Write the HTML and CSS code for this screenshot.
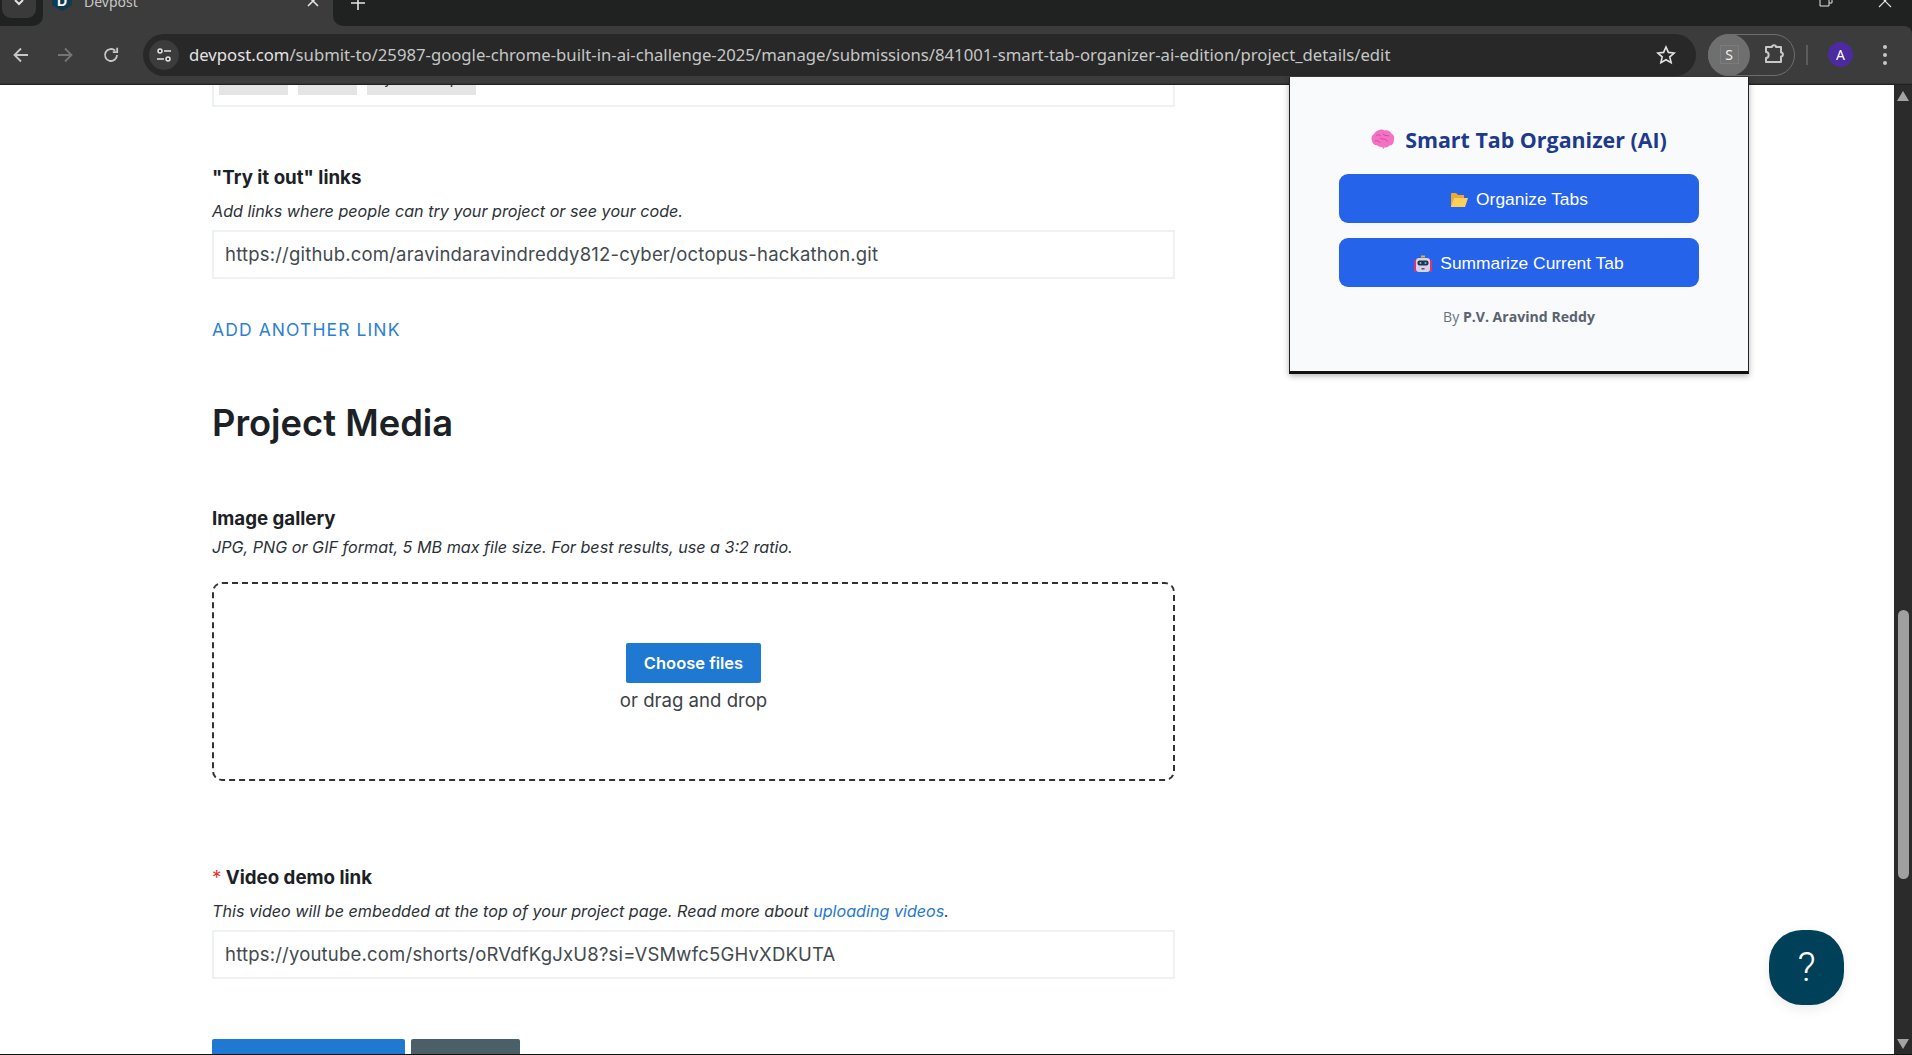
FILE: index.html
```html
<!DOCTYPE html>
<html lang="en">
  <head>
    <meta charset="UTF-8" />
    <meta name="viewport" content="width=device-width, initial-scale=1.0" />
    <title>Devpost</title>
    <link rel="stylesheet" href="styles.css">
  </head>
  <body>
    <header class="browser">
      <div class="tabstrip">
        <div class="strip-left">
          <div class="tab-list">
            <svg width="12" height="12" viewBox="0 0 12 12"><path d="M2 0l4 4 4-4" fill="none" stroke="#e3e3e3" stroke-width="2"/></svg>
          </div>
        </div>
        <div class="tab">
          <span class="favicon">D</span>
          <span class="tab-title">Devpost</span>
          <svg class="tab-close" width="12" height="12" viewBox="0 0 12 12"><path d="M1 1l10 10M11 1L1 11" stroke="#e3e3e3" stroke-width="1.6"/></svg>
        </div>
        <div class="strip-rest">
          <svg class="new-tab" width="14" height="14" viewBox="0 0 14 14"><path d="M7 0v14M0 7h14" stroke="#e3e3e3" stroke-width="1.6"/></svg>
          <div class="window-controls">
            <svg width="14" height="14" viewBox="0 0 14 14"><path d="M1 3h9v9H1zM4 3V1h9v8h-3" fill="none" stroke="#e3e3e3"/></svg>
            <svg width="14" height="14" viewBox="0 0 14 14"><path d="M1 1l12 12M13 1L1 13" stroke="#e3e3e3" stroke-width="1.1"/></svg>
          </div>
        </div>
      </div>
      <div class="toolbar">
        <svg class="nav-btn" width="18" height="18" viewBox="0 0 18 18"><path d="M16 9H2.5M9 2.5L2.5 9 9 15.500" fill="none" stroke="#c7c7c7" stroke-width="1.800"/></svg>
        <svg class="nav-btn" width="18" height="18" viewBox="0 0 18 18"><path d="M2 9h13.500M9 2.500L15.500 9 9 15.500" fill="none" stroke="#757575" stroke-width="1.800"/></svg>
        <svg class="nav-btn" width="18" height="18" viewBox="0 0 18 18"><path d="M15 9a6 6 0 1 1-1.800-4.300M15.200 1.800v4.400h-4.400" fill="none" stroke="#c7c7c7" stroke-width="1.800"/></svg>
        <div class="omnibox">
          <span class="site-info">
            <svg width="16" height="16" viewBox="0 0 16 16"><g fill="none" stroke="#e3e3e3" stroke-width="1.500"><circle cx="4" cy="4" r="2"/><circle cx="12" cy="12" r="2"/><path d="M8 4h7M1 12h7"/></g></svg>
          </span>
          <span class="url">devpost.com<span class="url-path">/submit-to/25987-google-chrome-built-in-ai-challenge-2025/manage/submissions/841001-smart-tab-organizer-ai-edition/project_details/edit</span></span>
          <svg class="star" width="20" height="20" viewBox="0 0 20 20"><path d="M10 2l2.400 5.400 5.800.6-4.400 3.900 1.300 5.700L10 14.700l-5.100 2.900 1.300-5.700L1.800 8l5.800-.6z" fill="none" stroke="#e3e3e3" stroke-width="1.600"/></svg>
        </div>
        <div class="ext-group">
          <span class="ext-active"><span class="ext-letter">S</span></span>
          <svg class="puzzle" width="23" height="21" viewBox="0 0 23 21"><path d="M3 3h6c0-2.500 4-2.500 4 0h5v5.500c2.500 0 2.500 4 0 4V18H3v-4c3.500 0 3.500-6 0-6z" fill="none" stroke="#c8c8c8" stroke-width="2" stroke-linejoin="round"/></svg>
        </div>
        <span class="toolbar-sep"></span>
        <span class="avatar">A</span>
        <svg class="kebab" width="6" height="22" viewBox="0 0 6 22"><circle cx="3" cy="3" r="2" fill="#c7c7c7"/><circle cx="3" cy="11" r="2" fill="#c7c7c7"/><circle cx="3" cy="19" r="2" fill="#c7c7c7"/></svg>
      </div>
    </header>

    <div class="viewport">
      <main class="page">
        <div class="tag-box">
          <span class="tag tag-a">Gemini</span>
          <span class="tag tag-b">Nano</span>
          <span class="tag tag-c">Python scripts</span>
        </div>

        <section class="field try-links">
          <label class="field-label">"Try it out" links</label>
          <p class="hint">Add links where people can try your project or see your code.</p>
          <div class="text-input">https://github.com/aravindaravindreddy812-cyber/octopus-hackathon.git</div>
          <a class="add-link">ADD ANOTHER LINK</a>
        </section>

        <h2 class="section-title">Project Media</h2>

        <section class="field gallery">
          <label class="field-label">Image gallery</label>
          <p class="hint hint-tight">JPG, PNG or GIF format, 5 MB max file size. For best results, use a 3:2 ratio.</p>
          <div class="dropzone">
            <button class="choose-btn">Choose files</button>
            <span class="drop-note">or drag and drop</span>
          </div>
        </section>

        <section class="field video">
          <label class="field-label"><span class="required">*</span> Video demo link</label>
          <p class="hint">This video will be embedded at the top of your project page. Read more about <a class="hint-link">uploading videos</a>.</p>
          <div class="text-input">https://youtube.com/shorts/oRVdfKgJxU8?si=VSMwfc5GHvXDKUTA</div>
        </section>

        <div class="form-actions">
          <span class="action action-save"></span>
          <span class="action action-back"></span>
        </div>
      </main>
      <aside class="scrollbar">
        <span class="arrow-up"></span>
        <span class="thumb"></span>
        <span class="arrow-down"></span>
      </aside>
    </div>

    <div class="ext-popup">
      <h3 class="popup-title">
        <svg width="24" height="22" viewBox="0 0 24 22"><path d="M7 1.500c2-1.200 5-1.200 6.500 0 3-.8 6 .6 6.800 3 2.500 1 3.500 4 2.500 6.500.5 3-1.500 5.500-4.500 5.600-1 1.600-3 2.300-4.800 1.700l-1 2-1.300-2.400c-2 .3-4-.3-5-1.600C3.500 16.300 1 14.500 1 11.500-.2 9 .8 6 3 5c.5-1.500 2.200-3 4-3.500z" fill="#f472c4"/><path d="M5 7c2-2 4-1 5 0M12 5c2 2 4 1 6 2M4 12c2-1 4 0 5 2M12 10c2 0 4 1 5 3M9 9c1 1 2 1 3 1" fill="none" stroke="#d946a6" stroke-width="1"/></svg>
        <span>Smart Tab Organizer (AI)</span>
      </h3>
      <button class="popup-btn">
        <svg width="18" height="16" viewBox="0 0 18 16"><path d="M1 15V2a1 1 0 0 1 1-1h4l2 2h6v3H5L2 15z" fill="#f0a92e"/><path d="M1 15l3-9h14l-3 9z" fill="#fdd05a"/></svg>
        <span>Organize Tabs</span>
      </button>
      <button class="popup-btn">
        <svg width="18" height="18" viewBox="0 0 18 18"><path d="M1 5v12M17 5v12" stroke="#d9366f" stroke-width="2"/><rect x="7" y="0.500" width="4" height="2" fill="#f0b429"/><rect x="2" y="3" width="14" height="14" rx="3" fill="#d9d2e6"/><rect x="3.500" y="5.500" width="11" height="5" rx="2" fill="#24344d"/><circle cx="6.500" cy="8" r="1" fill="#59c6f2"/><circle cx="11.500" cy="8" r="1" fill="#59c6f2"/><rect x="7.500" y="13" width="3" height="1.500" fill="#5a4d73"/></svg>
        <span>Summarize Current Tab</span>
      </button>
      <p class="popup-by">By <strong>P.V. Aravind Reddy</strong></p>
    </div>

    <div class="help-btn">?</div>
  </body>
</html>
```

FILE: styles.css
```css
* {
  box-sizing: border-box;
}
html, body {
  height: 100%;
}
body {
  margin: 0;
  height: 1055px;
  overflow: hidden;
  background: #fff;
  color: #1b2125;
  font-family: Inter, sans-serif;
  display: flex;
  flex-direction: column;
  border-bottom: 1px solid #111;
}
p, h2, h3 {
  margin: 0;
}

/* browser chrome */
.browser {
  flex: none;
  height: 85px;
  background: #202221;
  font-family: "Noto Sans", sans-serif;
  display: flex;
  flex-direction: column;
}
.tabstrip {
  height: 26px;
  background: #3c3c3c;
  display: flex;
  align-items: stretch;
  overflow: hidden;
}
.strip-left {
  width: 43px;
  flex: none;
  background: #202221;
  border-radius: 0 0 10px 0;
}
.tab-list {
  width: 34px;
  height: 18px;
  margin-left: 2px;
  background: #3a3a3a;
  border-radius: 0 0 9px 9px;
  display: flex;
  justify-content: center;
}
.tab {
  width: 290px;
  flex: none;
  display: flex;
  align-items: flex-start;
  padding-left: 9px;
}
.favicon {
  width: 20px;
  height: 20px;
  margin-top: -9px;
  background: #0b3c53;
  clip-path: polygon(50% 0, 100% 25%, 100% 70%, 50% 100%, 0 70%, 0 25%);
  color: #fff;
  font: bold 14px "Liberation Sans", sans-serif;
  text-align: center;
  line-height: 21px;
}
.tab-title {
  margin: -8px 0 0 12px;
  font-size: 14px;
  line-height: 20px;
  color: #c7c7c7;
  flex: 1;
}
.tab-close {
  margin: -5px 14px 0 0;
}
.strip-rest {
  flex: 1;
  background: #202221;
  border-radius: 0 0 0 10px;
  display: flex;
  align-items: flex-start;
}
.new-tab {
  margin: -4px 0 0 18px;
}
.window-controls {
  margin-left: auto;
  margin-top: -6px;
  display: flex;
  gap: 45px;
  padding-right: 20px;
}
.toolbar {
  height: 58px;
  flex: none;
  background: #3c3c3c;
  border-bottom: 1px solid #343434;
  border-radius: 0 8px 0 0;
  display: flex;
  align-items: center;
  padding: 0 0 0 12px;
}
.nav-btn {
  margin-right: 26px;
  flex: none;
}
.nav-btn:nth-child(3) {
  margin-left: 2px;
  margin-right: 23px;
}
.omnibox {
  width: 1553px;
  height: 42px;
  background: #282828;
  border-radius: 21px;
  display: flex;
  align-items: center;
  padding-left: 6px;
}
.site-info {
  width: 30px;
  height: 30px;
  border-radius: 50%;
  background: #3c3c3c;
  display: flex;
  align-items: center;
  justify-content: center;
}
.url {
  margin-left: 10px;
  font-size: 16.700px;
  color: #e3e3e3;
  white-space: nowrap;
}
.url-path {
  color: #c4c7c5;
}
.star {
  margin-left: auto;
  margin-right: 20px;
}
.ext-group {
  width: 87px;
  height: 42px;
  margin-left: 12px;
  border: 1px solid #6e6e6e;
  border-radius: 21px;
  display: flex;
  align-items: center;
}
.ext-active {
  width: 42px;
  height: 42px;
  margin-left: -1px;
  flex: none;
  background: #6f6f6f;
  border-radius: 50%;
  display: flex;
  align-items: center;
  justify-content: center;
}
.ext-letter {
  width: 19px;
  height: 19px;
  font-size: 14px;
  line-height: 17px;
  text-align: center;
  color: #f0f0f0;
  background: #707070;
  border: 1px solid #7c7c7c;
}
.puzzle {
  margin-left: 13px;
}
.toolbar-sep {
  width: 2px;
  height: 20px;
  margin-left: 11px;
  background: #5c5c5c;
}
.avatar {
  width: 25px;
  height: 25px;
  margin-left: 20px;
  border-radius: 50%;
  background: #4c2aa0;
  color: #fff;
  font-size: 14px;
  line-height: 25px;
  text-align: center;
}
.kebab {
  margin-left: 29px;
}

/* page */
.viewport {
  flex: 1;
  min-height: 0;
  display: flex;
}
.page {
  flex: 1;
  min-width: 0;
  overflow: hidden;
  padding-left: 212px;
}
.page > * {
  width: 963px;
}
.tag-box {
  height: 50px;
  margin-top: -28px;
  border: 2px solid #eef2f2;
  padding: 5px 5px 10px;
  display: flex;
  align-items: flex-end;
  gap: 10px;
}
.tag {
  background: #e5e5e5;
  height: 26px;
  font: 15px/20px Roboto, sans-serif;
  padding: 0 8px;
  color: #333;
  overflow: hidden;
  white-space: nowrap;
}
.tag-a { width: 69px; }
.tag-b { width: 59px; }
.tag-c { width: 109px; }
.field-label {
  display: block;
  font-size: 18.700px;
  font-weight: 700;
  line-height: 24px;
}
.required {
  color: #e5322d;
  font-weight: 400;
}
.hint {
  font-size: 16.150px;
  font-style: italic;
  line-height: 22px;
  color: #2b3237;
  margin-top: 10px;
}
.hint-tight {
  margin-top: 5px;
}
.hint-link {
  color: #1f78d1;
}
.text-input {
  height: 49px;
  margin-top: 8px;
  border: 2px solid #eef2f2;
  padding: 0 11px;
  font-size: 18.500px;
  line-height: 45px;
  letter-spacing: 0.200px;
  color: #434a4e;
}
.try-links {
  margin-top: 59px;
}
.add-link {
  display: block;
  margin-top: 39px;
  font-size: 17.500px;
  line-height: 24px;
  letter-spacing: 1.100px;
  color: #2c7fd5;
}
.section-title {
  margin-top: 57px;
  font-size: 36.300px;
  line-height: 48px;
  font-weight: 600;
}
.gallery {
  margin-top: 60px;
}
.dropzone {
  height: 199px;
  margin-top: 24px;
  border: 2px dashed #333;
  border-radius: 10px;
  display: flex;
  flex-direction: column;
  align-items: center;
  padding-top: 59px;
}
.choose-btn {
  width: 135px;
  height: 40px;
  border: 0;
  border-radius: 2px;
  background: #1f78d1;
  color: #fff;
  font: 600 16.500px Inter, sans-serif;
}
.drop-note {
  margin-top: 4px;
  font-size: 18.600px;
  line-height: 26px;
  color: #3b4347;
}
.video {
  margin-top: 85px;
}
.form-actions {
  display: flex;
  gap: 6px;
  margin-top: 60px;
}
.action {
  height: 40px;
  border-radius: 2px;
}
.action-save {
  width: 193px;
  flex: none;
  background: #1f78d1;
}
.action-back {
  width: 109px;
  flex: none;
  background: #4a5f66;
}

/* scrollbar */
.scrollbar {
  flex: none;
  width: 18px;
  background: #2b2b2b;
  position: relative;
}
.thumb {
  position: absolute;
  left: 4px;
  right: 3px;
  top: 525px;
  height: 269px;
  border-radius: 6px;
  background: #a0a0a0;
}
.arrow-up,
.arrow-down {
  position: absolute;
  left: 3px;
  border-left: 6.500px solid transparent;
  border-right: 6.500px solid transparent;
}
.arrow-up {
  top: 6px;
  border-bottom: 10px solid #a3a3a3;
}
.arrow-down {
  bottom: 5px;
  border-top: 10px solid #a3a3a3;
}

/* extension popup over the page */
.ext-popup {
  position: absolute;
  left: 1289px;
  top: 77px;
  width: 460px;
  height: 297px;
  background: #f8fafc;
  border: 1px solid #222;
  border-top: 0;
  border-bottom: 3px solid #111;
  box-shadow: 0 2px 6px rgba(0, 0, 0, 0.3);
  display: flex;
  flex-direction: column;
  align-items: center;
  padding-top: 47px;
  font-family: "Open Sans", sans-serif;
}
.popup-title {
  display: flex;
  align-items: center;
  gap: 10px;
  font-size: 21.400px;
  line-height: 32px;
  font-weight: 700;
  color: #1e3a8a;
}
.popup-btn {
  width: 360px;
  height: 49px;
  margin-top: 15px;
  padding: 2px 0 0;
  border: 0;
  border-radius: 9px;
  background: #2563eb;
  color: #fff;
  font: 17.400px "Liberation Sans", sans-serif;
  display: flex;
  align-items: center;
  justify-content: center;
  gap: 8px;
}
.popup-title + .popup-btn {
  margin-top: 18px;
}
.popup-by {
  margin-top: 20px;
  font-size: 14.100px;
  line-height: 20px;
  color: #6b7280;
}
.popup-by strong {
  color: #5a626e;
}

/* help launcher */
.help-btn {
  position: absolute;
  left: 1769px;
  top: 930px;
  width: 75px;
  height: 75px;
  border-radius: 33px;
  background: #004058;
  box-shadow: 0 4px 12px rgba(0, 0, 0, 0.08);
  color: #fff;
  font: 300 40px/75px Roboto, sans-serif;
  text-align: center;
}
```
